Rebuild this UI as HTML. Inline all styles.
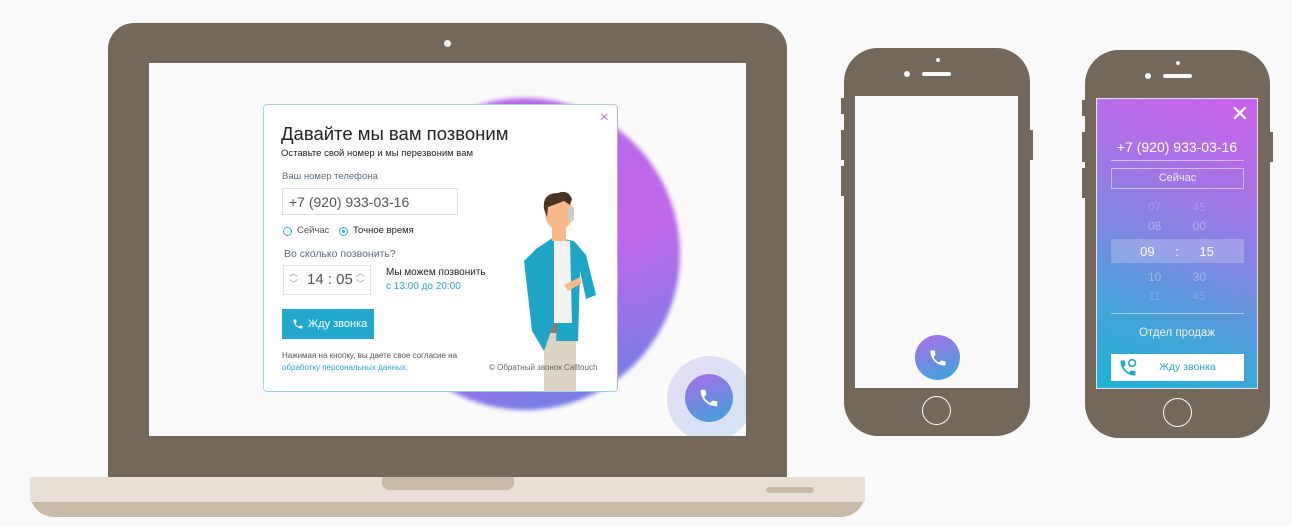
<!DOCTYPE html>
<html><head><meta charset="utf-8"><style>
*{margin:0;padding:0;box-sizing:border-box}
body{width:1292px;height:526px;background:#fafafa;position:relative;overflow:hidden;font-family:"Liberation Sans","DejaVu Sans",sans-serif}
.a{position:absolute}
.br{background:#73685a}
.ph{position:absolute;background:#73685a;border-radius:34px}
.side{position:absolute;background:#73685a;width:4px}
</style></head><body>
<!-- laptop -->
<div class="a br" style="left:108px;top:23px;width:679px;height:455px;border-radius:26px 26px 0 0"></div>
<div class="a" style="left:444px;top:40px;width:7px;height:7px;border-radius:50%;background:#f3f1ee"></div>
<div class="a" style="left:149px;top:63px;width:597px;height:373px;background:#fafafa;overflow:hidden">
  <div class="a" style="left:221px;top:35px;width:310px;height:312px;border-radius:50%;background:linear-gradient(160deg,#b56ae8 0%,#bf68ea 55%,#8a78e8 80%,#5a86e0 100%);filter:blur(2px)"></div>
  <div class="a" style="left:518px;top:293px;width:86px;height:86px;border-radius:50%;background:linear-gradient(135deg,#e6dcf5,#d0e6f3)"></div>
  <div class="a" style="left:536px;top:311px;width:48px;height:48px;border-radius:50%;background:linear-gradient(160deg,#a96ee6,#3ea3dc)"></div>
  <svg class="a" style="left:549px;top:324px" width="22" height="22" viewBox="0 0 24 24"><path d="M6.6 10.8c1.4 2.8 3.8 5.1 6.6 6.6l2.2-2.2c.3-.3.7-.4 1-.2 1.1.4 2.3.6 3.6.6.6 0 1 .4 1 1V20c0 .6-.4 1-1 1C10.6 21 3 13.4 3 4c0-.6.4-1 1-1h3.5c.6 0 1 .4 1 1 0 1.3.2 2.5.6 3.6.1.3 0 .7-.2 1z" fill="#fff"/></svg>
</div>
<!-- dialog -->
<div class="a" style="left:263px;top:104px;width:355px;height:288px;background:#fff;border:1.5px solid #9fd3ea;border-right-color:#c9a3ee;border-top-color:#b8c8ef;border-radius:4px;color:#222">
  <div class="a" style="right:8px;top:4px;color:#c87ce8;font-size:16px">×</div>
  <div class="a" style="left:17px;top:18px;font-size:18.5px;color:#222">Давайте мы вам позвоним</div>
  <div class="a" style="left:17px;top:43px;font-size:9.5px">Оставьте свой номер и мы перезвоним вам</div>
  <div class="a" style="left:18px;top:66px;font-size:9.5px;color:#5f6d7c">Ваш номер телефона</div>
  <div class="a" style="left:18px;top:83px;width:176px;height:27px;border:1px solid #ddd;font-size:14px;color:#555;padding:5px 6px">+7 (920) 933-03-16</div>
  <div class="a" style="left:19px;top:122px;width:9px;height:9px;border:1px solid #2db1d5;border-radius:50%"></div>
  <div class="a" style="left:33px;top:120px;font-size:9.5px;color:#555">Сейчас</div>
  <div class="a" style="left:75px;top:122px;width:9px;height:9px;border:1px solid #2db1d5;border-radius:50%"><div style="margin:2px;width:3px;height:3px;background:#2db1d5;border-radius:50%"></div></div>
  <div class="a" style="left:89px;top:120px;font-size:9.5px">Точное время</div>
  <div class="a" style="left:20px;top:143px;font-size:10.5px;color:#5f6d7c">Во сколько позвонить?</div>
  <div class="a" style="left:19px;top:160px;width:88px;height:30px;border:1px solid #e2e2e2;font-size:15px;color:#555;padding:5px 0 0 23px">14 : 05</div>
  <div class="a" style="left:25px;top:163px;font-size:9px;color:#999;line-height:11px">︿<br>﹀</div>
  <div class="a" style="left:92px;top:163px;font-size:9px;color:#999;line-height:11px">︿<br>﹀</div>
  <div class="a" style="left:122px;top:162px;font-size:10px">Мы можем позвонить</div>
  <div class="a" style="left:122px;top:176px;font-size:10px;color:#2aa8cf">с 13:00 до 20:00</div>
  <div class="a" style="left:18px;top:204px;width:92px;height:30px;background:#22a8cd;color:#fff;font-size:11px;padding:9px 0 0 26px;white-space:nowrap">Жду звонка</div>
  <svg class="a" style="left:28px;top:213px" width="12" height="12" viewBox="0 0 24 24"><path d="M6.6 10.8c1.4 2.8 3.8 5.1 6.6 6.6l2.2-2.2c.3-.3.7-.4 1-.2 1.1.4 2.3.6 3.6.6.6 0 1 .4 1 1V20c0 .6-.4 1-1 1C10.6 21 3 13.4 3 4c0-.6.4-1 1-1h3.5c.6 0 1 .4 1 1 0 1.3.2 2.5.6 3.6.1.3 0 .7-.2 1z" fill="#fff"/></svg>
  <div class="a" style="left:18px;top:246px;font-size:8px;color:#555">Нажимая на кнопку, вы даете свое согласие на</div>
  <div class="a" style="left:18px;top:258px;font-size:8px;color:#2aa8cf">обработку персональных данных.</div>
  <!-- man -->
  <svg class="a" style="left:250px;top:86px" width="90" height="200" viewBox="0 0 90 200">
    <rect x="30" y="140" width="32" height="60" fill="#ddd3c3"/>
    <rect x="30" y="132" width="32" height="10" fill="#8c7b69"/>
    <path d="M22 58 L40 46 L60 50 L72 64 L82 104 L72 108 L66 80 L64 150 L42 150 L44 120 L30 160 L18 140 L10 70 Z" fill="#1fa5c6"/>
    <path d="M40 48 L56 50 L58 132 L40 132 Z" fill="#f2f2f2"/>
    <rect x="38" y="34" width="14" height="16" fill="#f7b98b"/>
    <ellipse cx="45" cy="22" rx="14" ry="17" fill="#f7b98b"/>
    <path d="M30 18 Q28 2 44 2 Q54 -2 58 8 L56 14 L50 10 Q40 14 34 16 L33 26 Z" fill="#4b3324"/>
    <rect x="54" y="16" width="6" height="14" rx="2" fill="#ccc"/>
    <path d="M50 94 L66 86 L68 92 L54 100 Z" fill="#f7b98b"/>
  </svg>
  <div class="a" style="left:225px;top:258px;font-size:8px;color:#666">© Обратный звонок Calltouch</div>
</div>
<!-- base -->
<div class="a" style="left:30px;top:477px;width:835px;height:40px;background:#c9baa8;border-radius:0 0 24px 24px"></div>
<div class="a" style="left:30px;top:477px;width:835px;height:25px;background:#e8dfd5"></div>
<div class="a" style="left:382px;top:477px;width:132px;height:13px;background:#c9baa8;border-radius:0 0 8px 8px"></div>
<div class="a" style="left:766px;top:487px;width:48px;height:6px;background:#c9baa8;border-radius:3px"></div>
<!-- phone1 -->
<div class="side" style="left:841px;top:98px;height:16px"></div>
<div class="side" style="left:841px;top:130px;height:30px"></div>
<div class="side" style="left:841px;top:166px;height:30px"></div>
<div class="side" style="left:1029px;top:130px;height:30px"></div>
<div class="ph" style="left:844px;top:48px;width:186px;height:388px"></div>
<div class="a" style="left:936px;top:58px;width:4px;height:4px;border-radius:50%;background:#fafafa"></div>
<div class="a" style="left:904px;top:71px;width:6px;height:6px;border-radius:50%;background:#fafafa"></div>
<div class="a" style="left:922px;top:72px;width:29px;height:4px;border-radius:2px;background:#fafafa"></div>
<div class="a" style="left:855px;top:96px;width:163px;height:292px;background:#fafafa"></div>
<div class="a" style="left:915px;top:335px;width:45px;height:45px;border-radius:50%;background:linear-gradient(160deg,#b16ce8,#35a8da)"></div>
<svg class="a" style="left:928px;top:348px" width="20" height="20" viewBox="0 0 24 24"><path d="M6.6 10.8c1.4 2.8 3.8 5.1 6.6 6.6l2.2-2.2c.3-.3.7-.4 1-.2 1.1.4 2.3.6 3.6.6.6 0 1 .4 1 1V20c0 .6-.4 1-1 1C10.6 21 3 13.4 3 4c0-.6.4-1 1-1h3.5c.6 0 1 .4 1 1 0 1.3.2 2.5.6 3.6.1.3 0 .7-.2 1z" fill="#fff"/></svg>
<div class="a" style="left:922px;top:396px;width:29px;height:29px;border-radius:50%;border:1.5px solid #fafafa"></div>
<!-- phone2 -->
<div class="side" style="left:1082px;top:100px;height:16px"></div>
<div class="side" style="left:1082px;top:132px;height:30px"></div>
<div class="side" style="left:1082px;top:168px;height:30px"></div>
<div class="side" style="left:1269px;top:132px;height:30px"></div>
<div class="ph" style="left:1085px;top:50px;width:185px;height:388px"></div>
<div class="a" style="left:1176px;top:61px;width:4px;height:4px;border-radius:50%;background:#fafafa"></div>
<div class="a" style="left:1145px;top:73px;width:6px;height:6px;border-radius:50%;background:#fafafa"></div>
<div class="a" style="left:1163px;top:74px;width:29px;height:4px;border-radius:2px;background:#fafafa"></div>
<div class="a" style="left:1096px;top:98px;width:162px;height:291px;background:linear-gradient(200deg,#cc62ea 0%,#a873e6 28%,#7d88e2 52%,#40a6d8 78%,#20b2d2 100%);border:1px solid #e6e0f0;color:#fff;text-align:center">
  <div class="a" style="right:8px;top:2px;font-size:22px;font-weight:bold">✕</div>
  <div class="a" style="left:0;width:100%;top:40px;font-size:14px">+7 (920) 933-03-16</div>
  <div class="a" style="left:14px;top:61px;width:133px;height:1px;background:rgba(255,255,255,.5)"></div>
  <div class="a" style="left:14px;top:69px;width:133px;height:21px;border:1px solid rgba(255,255,255,.5);font-size:11px;padding-top:3px;color:#eee">Сейчас</div>
  <div class="a" style="left:0;width:100%;top:101px;font-size:12px;color:rgba(255,255,255,.2);word-spacing:28px">07 45</div>
  <div class="a" style="left:0;width:100%;top:120px;font-size:12px;color:rgba(255,255,255,.35);word-spacing:28px">08 00</div>
  <div class="a" style="left:14px;top:140px;width:133px;height:24px;background:rgba(255,255,255,.22)"></div>
  <div class="a" style="left:0;width:100%;top:145px;font-size:13px;word-spacing:17px">09 : 15</div>
  <div class="a" style="left:0;width:100%;top:171px;font-size:12px;color:rgba(255,255,255,.35);word-spacing:28px">10 30</div>
  <div class="a" style="left:0;width:100%;top:190px;font-size:12px;color:rgba(255,255,255,.2);word-spacing:28px">11 45</div>
  <div class="a" style="left:14px;top:214px;width:133px;height:1px;background:rgba(255,255,255,.5)"></div>
  <div class="a" style="left:0;width:100%;top:228px;font-size:11.5px;color:#eee">Отдел продаж</div>
  <div class="a" style="left:14px;top:255px;width:133px;height:27px;background:#fff;color:#2aa8cf;font-size:10.5px;padding:7px 0 0 20px">Жду звонка</div>
  <svg class="a" style="left:21px;top:259px" width="20" height="20" viewBox="0 0 24 24"><path d="M6.6 10.8c1.4 2.8 3.8 5.1 6.6 6.6l2.2-2.2c.3-.3.7-.4 1-.2 1.1.4 2.3.6 3.6.6.6 0 1 .4 1 1V20c0 .6-.4 1-1 1C10.6 21 3 13.4 3 4c0-.6.4-1 1-1h3.5c.6 0 1 .4 1 1 0 1.3.2 2.5.6 3.6.1.3 0 .7-.2 1z" fill="#24a7cd"/><circle cx="17" cy="6" r="4" fill="none" stroke="#24a7cd" stroke-width="2"/></svg>
</div>
<div class="a" style="left:1163px;top:398px;width:29px;height:29px;border-radius:50%;border:1.5px solid #fafafa"></div>
</body></html>
